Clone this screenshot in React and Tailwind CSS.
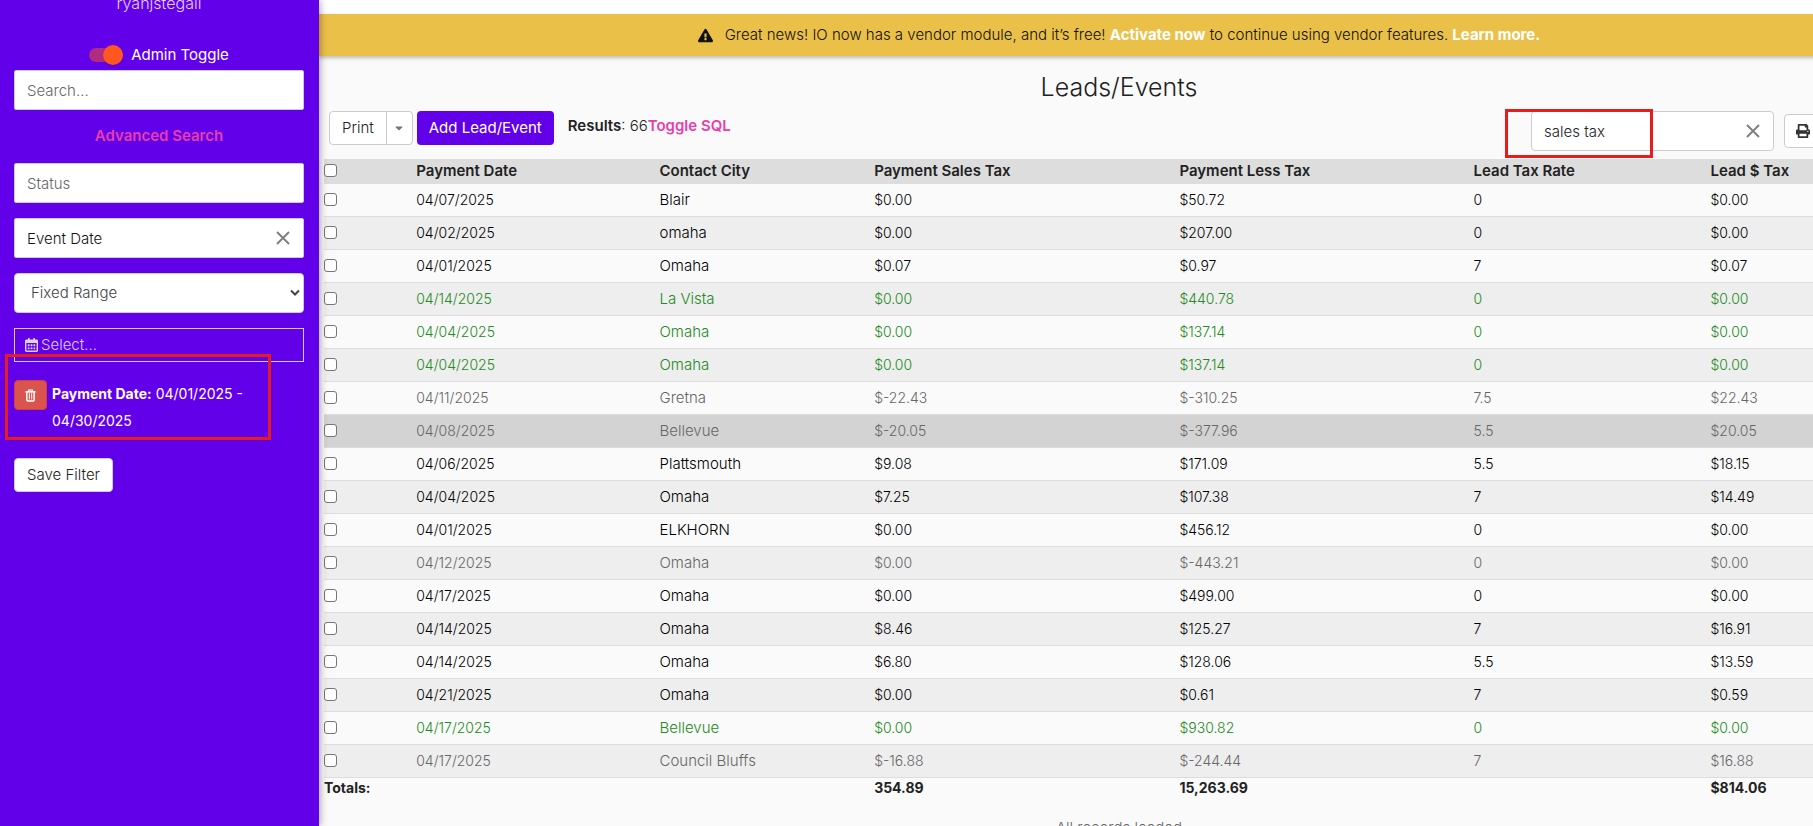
import { FaPrint, FaExclamationTriangle, FaCaretDown } from 'react-icons/fa';

const columns = ['Payment Date', 'Contact City', 'Payment Sales Tax', 'Payment Less Tax', 'Lead Tax Rate', 'Lead $ Tax'];

const rows = [
  ['04/07/2025', 'Blair', '$0.00', '$50.72', '0', '$0.00', 'normal'],
  ['04/02/2025', 'omaha', '$0.00', '$207.00', '0', '$0.00', 'normal'],
  ['04/01/2025', 'Omaha', '$0.07', '$0.97', '7', '$0.07', 'normal'],
  ['04/14/2025', 'La Vista', '$0.00', '$440.78', '0', '$0.00', 'green'],
  ['04/04/2025', 'Omaha', '$0.00', '$137.14', '0', '$0.00', 'green'],
  ['04/04/2025', 'Omaha', '$0.00', '$137.14', '0', '$0.00', 'green'],
  ['04/11/2025', 'Gretna', '$-22.43', '$-310.25', '7.5', '$22.43', 'gray'],
  ['04/08/2025', 'Bellevue', '$-20.05', '$-377.96', '5.5', '$20.05', 'active'],
  ['04/06/2025', 'Plattsmouth', '$9.08', '$171.09', '5.5', '$18.15', 'normal'],
  ['04/04/2025', 'Omaha', '$7.25', '$107.38', '7', '$14.49', 'normal'],
  ['04/01/2025', 'ELKHORN', '$0.00', '$456.12', '0', '$0.00', 'normal'],
  ['04/12/2025', 'Omaha', '$0.00', '$-443.21', '0', '$0.00', 'gray'],
  ['04/17/2025', 'Omaha', '$0.00', '$499.00', '0', '$0.00', 'normal'],
  ['04/14/2025', 'Omaha', '$8.46', '$125.27', '7', '$16.91', 'normal'],
  ['04/14/2025', 'Omaha', '$6.80', '$128.06', '5.5', '$13.59', 'normal'],
  ['04/21/2025', 'Omaha', '$0.00', '$0.61', '7', '$0.59', 'normal'],
  ['04/17/2025', 'Bellevue', '$0.00', '$930.82', '0', '$0.00', 'green'],
  ['04/17/2025', 'Council Bluffs', '$-16.88', '$-244.44', '7', '$16.88', 'gray'],
];

const tones = {
  normal: 'text-black odd:bg-[#fafafa] even:bg-[#eeeeee]',
  green: 'text-[#228b22] odd:bg-[#fafafa] even:bg-[#eeeeee]',
  gray: 'text-[#666666] odd:bg-[#fafafa] even:bg-[#eeeeee]',
  active: 'text-[#666666] bg-[#d3d3d3]',
};

const box = 'block size-[13px] appearance-none rounded-[3px] border border-[#767676] bg-white checked:bg-[#6200ea]';

function Cross() {
  return (
    <svg viewBox="0 0 14 14" className="size-[14px]" fill="none" stroke="#808080" strokeWidth="2" aria-hidden="true">
      <path d="M1 1 L13 13 M13 1 L1 13" />
    </svg>
  );
}

function CalendarIcon() {
  return (
    <svg viewBox="0 0 13 14" className="h-[14px] w-[13px]" fill="currentColor" aria-hidden="true">
      <path fillRule="evenodd" d="M3 0h1.6v1.6h3.8V0H10v1.6h1.6c.8 0 1.4.6 1.4 1.4v9.6c0 .8-.6 1.4-1.4 1.4H1.4C.6 14 0 13.4 0 12.6V3c0-.8.6-1.4 1.4-1.4H3zM1.4 5v7.6h10.2V5z" />
      <path d="M2.8 6.3h1.7v2H2.8zM5.6 6.3h1.8v2H5.6zM8.5 6.3h1.7v2H8.5zM2.8 9.5h1.7v1.8H2.8zM5.6 9.5h1.8v1.8H5.6zM8.5 9.5h1.7v1.8H8.5z" />
    </svg>
  );
}

function TrashIcon() {
  return (
    <svg viewBox="0 0 12 14" className="h-[13px] w-[11px]" fill="none" stroke="currentColor" aria-hidden="true">
      <path d="M.5 3h11" strokeWidth="1.8" />
      <path d="M4 2.6V1h4v1.6" strokeWidth="1.3" />
      <path d="M2 3.5v8.2c0 .8.4 1.3 1.2 1.3h5.6c.8 0 1.2-.5 1.2-1.3V3.5" strokeWidth="1.6" />
      <path d="M4.7 4.5v6.8M7.3 4.5v6.8" strokeWidth="1.1" />
    </svg>
  );
}

function Sidebar() {
  return (
    <aside className="relative z-10 flex w-[319px] shrink-0 flex-col bg-[#6200ea] pr-[15px] pl-[14px] text-white shadow-[0_0_8px_rgba(0,0,0,0.45)]">
      <div className="-mt-[9px] h-6 text-center text-base leading-6 text-[#e2d0fb]">ryanjstegall</div>
      <label className="mt-[28px] flex h-6 items-center justify-center gap-2 text-[15px] font-normal">
        <input type="checkbox" role="switch" defaultChecked className="sr-only" />
        <span className="flex h-[14px] w-[34px] items-center justify-end rounded-full bg-[#b02c82]">
          <span className="size-5 shrink-0 rounded-full bg-[#ff5722] shadow-sm" />
        </span>
        Admin Toggle
      </label>
      <input aria-label="Search" placeholder="Search..." className="mt-[3px] h-10 w-full rounded-[2px] border border-[#cccccc] bg-white px-3 text-[15px] text-[#333333] placeholder:text-[#666666]" />
      <a href="#advanced" className="mt-[14px] mb-4 block text-center text-[15px] leading-[23px] font-semibold text-[#e83eaa]">Advanced Search</a>
      <input aria-label="Status" placeholder="Status" className="h-10 w-full rounded-[2px] border border-[#cccccc] bg-white px-3 text-[15px] text-[#333333] placeholder:text-[#666666]" />
      <div className="mt-[15px] flex h-10 items-center rounded-[2px] border border-[#cccccc] bg-white pr-[13px]">
        <input aria-label="Date type" defaultValue="Event Date" className="h-full min-w-0 flex-1 bg-transparent px-3 text-[15px] text-[#111111]" />
        <button aria-label="Clear date type"><Cross /></button>
      </div>
      <div className="mt-[15px] grid h-10 items-center rounded-[4px] border border-[#cccccc] bg-white">
        <select aria-label="Range" className="col-start-1 row-start-1 h-full w-full appearance-none bg-transparent px-4 text-[15px] text-[#444444]">
          <option>Fixed Range</option>
        </select>
        <svg viewBox="0 0 10 8" className="pointer-events-none col-start-1 row-start-1 mr-[3px] h-2 w-[10px] justify-self-end" fill="none" stroke="#444444" strokeWidth="2" aria-hidden="true">
          <path d="M1 1.5 L5 5.5 L9 1.5" />
        </svg>
      </div>
      <button className="mt-[15px] flex h-[34px] items-center gap-[3px] border border-[#cccccc] px-[10px] text-[15px] text-[#dcd2ea]">
        <CalendarIcon />
        Select...
      </button>
      <div className="relative mt-[18px] flex items-start gap-[5px] text-sm">
        <button aria-label="Remove payment date filter" className="flex h-[30px] w-[33px] shrink-0 items-center justify-center rounded-[4px] border border-[#d43f3a] bg-[#d9534f]">
          <TrashIcon />
        </button>
        <p className="w-[210px] leading-[27px] font-normal"><b>Payment Date:</b> 04/01/2025 - 04/30/2025</p>
        <div className="pointer-events-none absolute -top-[26px] -left-[9px] h-[86px] w-[266px] border-[3px] border-[#e81c1c]" />
      </div>
      <button className="mt-6 h-[34px] self-start rounded-[4px] border border-[#cccccc] bg-white px-3 text-[15px] text-[#222222]">Save Filter</button>
    </aside>
  );
}

function Toolbar() {
  return (
    <div className="flex h-12 items-start px-[5px] text-[15px]">
      <div className="ml-[5px] flex h-[34px] rounded-[4px] border border-[#cccccc] bg-white text-[#222222]">
        <button className="border-r border-[#cccccc] px-3">Print</button>
        <button aria-label="More print options" className="flex w-[25px] items-center justify-center text-[#777777]"><FaCaretDown className="size-3" /></button>
      </div>
      <button className="ml-1 h-[34px] rounded-[4px] bg-[#6200ea] px-3 font-normal text-white">Add Lead/Event</button>
      <p className="ml-[14px] leading-[29px] text-[#222222]"><b className="font-semibold">Results</b>: 66<a href="#sql" className="font-semibold text-[#e83eaa]">Toggle SQL</a></p>
      <div className="relative ml-auto flex h-10 w-[243px] items-center rounded-[4px] border border-[#cccccc] bg-white pr-[13px]">
        <input aria-label="Search columns" defaultValue="sales tax" className="h-full min-w-0 flex-1 bg-transparent px-3 text-[15px] text-[#222222]" />
        <button aria-label="Clear search"><Cross /></button>
        <div className="pointer-events-none absolute -top-[3px] -left-[27px] h-[49px] w-[148px] border-[3px] border-[#e81c1c]" />
      </div>
      <div className="mt-[3px] ml-[10px] w-[130px]">
        <button aria-label="Print list" className="flex h-[34px] items-center rounded-[4px] border border-[#cccccc] bg-white px-[11px] text-[#333333]"><FaPrint className="size-[14px]" /></button>
      </div>
    </div>
  );
}

function LeadsTable() {
  return (
    <div className="px-[5px]">
      <table className="w-full table-fixed border-collapse text-left text-sm">
        <colgroup>
          <col className="w-[5.8%]" />
          <col className="w-[15.3%]" />
          <col className="w-[13.5%]" />
          <col className="w-[19.2%]" />
          <col className="w-[18.5%]" />
          <col className="w-[14.9%]" />
          <col />
        </colgroup>
        <thead>
          <tr className="h-6 border-b border-[#dddddd] bg-[#dddddd] text-[15px] leading-5 text-[#222222]">
            <th className="p-0"><input type="checkbox" aria-label="Select all" className={box} /></th>
            {columns.map((c) => <th key={c} className="p-0 font-semibold">{c}</th>)}
          </tr>
        </thead>
        <tbody>
          {rows.map((r, i) => (
            <tr key={i} className={'h-[33px] border-b border-[#dddddd] ' + tones[r[6]]}>
              <td className="p-0"><input type="checkbox" aria-label={'Select row ' + (i + 1)} className={box} /></td>
              {r.slice(0, 6).map((v, j) => <td key={j} className={j === 1 ? 'p-0 text-[15px] leading-5' : 'p-0'}>{v}</td>)}
            </tr>
          ))}
        </tbody>
        <tfoot>
          <tr className="h-[22px] font-bold text-[#222222]">
            <td className="p-0">Totals:</td>
            <td /><td />
            <td className="p-0">354.89</td>
            <td className="p-0">15,263.69</td>
            <td />
            <td className="p-0">$814.06</td>
          </tr>
        </tfoot>
      </table>
    </div>
  );
}

export default function App() {
  return (
    <div className="flex h-screen overflow-hidden bg-[#fafafa] font-['Inter',sans-serif] font-light">
      <Sidebar />
      <main className="min-w-0 flex-1 overflow-hidden">
        <div className="w-[calc(100%+106px)]">
          <div className="h-[14px] bg-white" />
          <div className="flex h-[42px] items-center justify-center bg-[#ebc048] text-[15px] text-[#111111] shadow-[0_2px_4px_rgba(0,0,0,0.25)]">
            <FaExclamationTriangle className="mr-3 size-[15px]" />
            <p>Great news! IO now has a vendor module, and it’s free! <a href="#activate" className="font-bold text-white">Activate now</a> to continue using vendor features. <a href="#learn" className="font-bold text-white">Learn more.</a></p>
          </div>
          <h1 className="pt-[15px] pb-2 text-center text-[25px] leading-8 text-[#222222]">Leads/Events</h1>
          <Toolbar />
          <LeadsTable />
          <p className="mt-[19px] text-center text-[15px] leading-5 text-[#666666]">All records loaded</p>
        </div>
      </main>
    </div>
  );
}
